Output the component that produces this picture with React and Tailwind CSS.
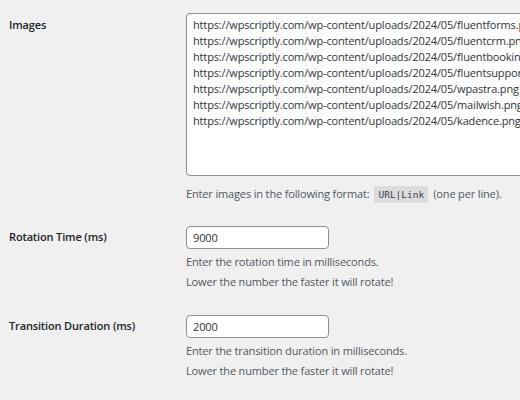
const urls = [
  "https://wpscriptly.com/wp-content/uploads/2024/05/fluentforms.png|https://fluentforms.com",
  "https://wpscriptly.com/wp-content/uploads/2024/05/fluentcrm.png|https://fluentcrm.com",
  "https://wpscriptly.com/wp-content/uploads/2024/05/fluentbooking.png|https://fluentbooking.com",
  "https://wpscriptly.com/wp-content/uploads/2024/05/fluentsupport.png|https://fluentsupport.com",
  "https://wpscriptly.com/wp-content/uploads/2024/05/wpastra.png|https://wpastra.com",
  "https://wpscriptly.com/wp-content/uploads/2024/05/mailwish.png|https://mailwish.com",
  "https://wpscriptly.com/wp-content/uploads/2024/05/kadence.png|https://kadencewp.com",
];

const font = { fontFamily: '"Open Sans", "Noto Sans", sans-serif' };

export default function App() {
  return (
    <div
      className="w-[520px] h-[400px] overflow-hidden bg-[#f0f0f1] text-[#1d2327] text-[11px] tracking-[-0.15px]"
      style={font}
    >
      {/* Images */}
      <div className="flex pt-[13px]">
        <div className="w-[186px] shrink-0 pl-[9px] pt-[3px] font-semibold leading-[18px]">
          Images
        </div>
        <div className="flex flex-col">
          <div className="w-[400px] h-[163px] bg-white border border-[#8c8f94] rounded-[4px] pl-[6px] pt-[3px] overflow-hidden">
            {urls.map((u) => (
              <div key={u} className="whitespace-nowrap leading-[16px] text-[#2c3338]">
                {u}
              </div>
            ))}
          </div>
          <p className="mt-[9px] leading-[18px] text-[#50575e] flex items-center whitespace-nowrap">
            Enter images in the following format:
            <code
              className="mx-[5px] px-[4px] h-[17px] leading-[17px] bg-[#dcdcde] text-[9.5px] tracking-normal text-[#3c434a]"
              style={{ fontFamily: '"DejaVu Sans Mono", monospace' }}
            >
              URL|Link
            </code>
            (one per line).
          </p>
        </div>
      </div>

      {/* Rotation Time */}
      <div className="flex mt-[23px]">
        <div className="w-[186px] shrink-0 pl-[9px] pt-[2px] font-semibold leading-[18px]">
          Rotation Time (ms)
        </div>
        <div className="flex flex-col">
          <div className="w-[143px] h-[23px] bg-white border border-[#8c8f94] rounded-[4px] pl-[6px] leading-[21px] text-[#2c3338]">
            9000
          </div>
          <p className="mt-[3px] leading-[20px] text-[#50575e]">
            Enter the rotation time in milliseconds.
          </p>
          <p className="leading-[20px] text-[#50575e]">
            Lower the number the faster it will rotate!
          </p>
        </div>
      </div>

      {/* Transition Duration */}
      <div className="flex mt-[23px]">
        <div className="w-[186px] shrink-0 pl-[9px] pt-[2px] font-semibold leading-[18px]">
          Transition Duration (ms)
        </div>
        <div className="flex flex-col">
          <div className="w-[143px] h-[23px] bg-white border border-[#8c8f94] rounded-[4px] pl-[6px] leading-[21px] text-[#2c3338]">
            2000
          </div>
          <p className="mt-[3px] leading-[20px] text-[#50575e] whitespace-nowrap">
            Enter the transition duration in milliseconds.
          </p>
          <p className="leading-[20px] text-[#50575e]">
            Lower the number the faster it will rotate!
          </p>
        </div>
      </div>
    </div>
  );
}
